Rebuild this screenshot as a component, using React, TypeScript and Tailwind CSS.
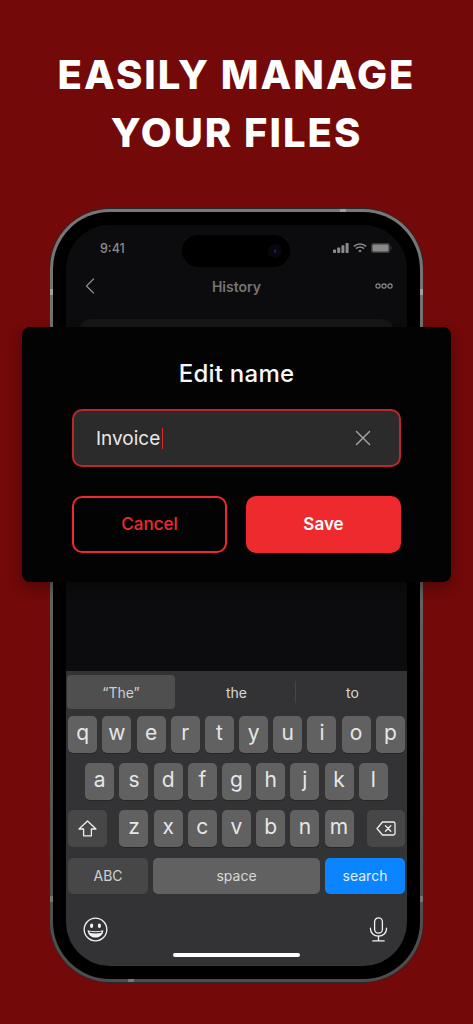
import React from 'react';
import { X } from 'lucide-react';

const font = { fontFamily: 'Inter, "Noto Sans", sans-serif' };

function Key({ label }: { label: string }) {
  return (
    <div className="flex h-[36.5px] w-[29px] items-center justify-center rounded-[5px] bg-[#616161] pb-[3px] text-[21px] leading-none text-[#e6e6e6] shadow-[0_1px_0_#262626]">
      {label}
    </div>
  );
}

function Signal() {
  return (
    <svg width="16" height="10" viewBox="0 0 16 10" fill="#8a8a8a">
      <rect x="0" y="6.5" width="3" height="3.5" rx="0.7" />
      <rect x="4.2" y="4.5" width="3" height="5.5" rx="0.7" />
      <rect x="8.4" y="2.3" width="3" height="7.7" rx="0.7" />
      <rect x="12.6" y="0" width="3" height="10" rx="0.7" />
    </svg>
  );
}

function Wifi() {
  return (
    <svg width="14" height="10" viewBox="0 0 14 10" fill="none" stroke="#8a8a8a" strokeWidth="1.6">
      <path d="M0.8 3.4C4.4 0.2 9.6 0.2 13.2 3.4" />
      <path d="M3 5.7C5.4 3.7 8.6 3.7 11 5.7" />
      <path d="M7 9.6L5.1 7.7C6.2 6.9 7.8 6.9 8.9 7.7Z" fill="#8a8a8a" stroke="none" />
    </svg>
  );
}

function Battery() {
  return (
    <svg width="21" height="10" viewBox="0 0 21 10">
      <rect x="0" y="0" width="19" height="10" rx="2.6" fill="#3a3a3a" />
      <rect x="1.5" y="1.5" width="16" height="7" rx="1.4" fill="#8a8a8a" />
      <rect x="19.6" y="3.4" width="1.2" height="3.2" rx="0.6" fill="#3a3a3a" />
    </svg>
  );
}

function Shift() {
  return (
    <svg width="19" height="17" viewBox="0 0 19 17" fill="none" stroke="#eeeeee" strokeWidth="1.3" strokeLinejoin="round">
      <path d="M9.5 1L1 9H5.6V15.8H13.4V9H18Z" />
    </svg>
  );
}

function Backspace() {
  return (
    <svg width="20" height="15" viewBox="0 0 20 15" fill="none" stroke="#eeeeee" strokeWidth="1.3" strokeLinecap="round" strokeLinejoin="round">
      <path d="M6.5 1H17.3C18.2 1 19 1.8 19 2.7V12.3C19 13.2 18.2 14 17.3 14H6.5L1 7.5Z" />
      <path d="M9.5 4.8L14.8 10.2M14.8 4.8L9.5 10.2" />
    </svg>
  );
}

function Emoji() {
  return (
    <svg width="25" height="25" viewBox="0 0 25 25" fill="none">
      <circle cx="12.5" cy="12.5" r="11.3" stroke="#f2f2f2" strokeWidth="1.3" />
      <ellipse cx="8.6" cy="8.8" rx="1.6" ry="2.2" fill="#f2f2f2" />
      <ellipse cx="16.4" cy="8.8" rx="1.6" ry="2.2" fill="#f2f2f2" />
      <path d="M4.6 13.2C9.5 14.6 15.5 14.6 20.4 13.2C20 18 16.6 20.6 12.5 20.6C8.4 20.6 5 18 4.6 13.2Z" fill="#f2f2f2" />
      <path d="M6.6 15.2C10.4 16.1 14.6 16.1 18.4 15.2" stroke="#333335" strokeWidth="1.2" />
    </svg>
  );
}

function Mic() {
  return (
    <svg width="19" height="25" viewBox="0 0 19 25" fill="none" stroke="#f2f2f2" strokeWidth="1.3" strokeLinecap="round">
      <rect x="5.6" y="0.8" width="7.8" height="15.4" rx="3.9" />
      <path d="M1.4 11.2C1.4 16 4.8 19.2 9.5 19.2C14.2 19.2 17.6 16 17.6 11.2" />
      <path d="M9.5 19.2V23.6M3.8 23.9H15.2" />
    </svg>
  );
}

function Keyboard() {
  return (
    <div className="mt-auto flex h-[295px] flex-col bg-[#333335] text-[#e6e6e6]">
      <div className="mt-[4px] flex h-[34px] items-center text-[14px] text-[#d8d8d8]">
        <div className="ml-[1px] flex h-full w-[108px] items-center justify-center rounded-[4px] bg-[#4f4f4f] text-[#cfcfcf]">“The”</div>
        <div className="flex h-full w-[120px] items-center justify-center pl-[3px]">the</div>
        <div className="h-[22px] w-px bg-[#454547]" />
        <div className="flex h-full flex-1 items-center justify-center pl-[2px]">to</div>
      </div>
      <div className="mt-[7px] flex justify-center gap-[5.2px]">
        {'qwertyuiop'.split('').map(k => <Key key={k} label={k} />)}
      </div>
      <div className="mt-[10.5px] flex justify-center gap-[5.2px]">
        {'asdfghjkl'.split('').map(k => <Key key={k} label={k} />)}
      </div>
      <div className="mt-[10.5px] flex items-center justify-between px-[2px]">
        <div className="flex h-[36.5px] w-[38.5px] items-center justify-center rounded-[5px] bg-[#474747]">
          <Shift />
        </div>
        <div className="flex gap-[5.2px]">
          {'zxcvbnm'.split('').map(k => <Key key={k} label={k} />)}
        </div>
        <div className="flex h-[36.5px] w-[38.5px] items-center justify-center rounded-[5px] bg-[#474747]">
          <Backspace />
        </div>
      </div>
      <div className="mt-[11px] flex h-[36.5px] gap-[5px] px-[2px] text-[14px]">
        <div className="flex w-[80px] items-center justify-center rounded-[5px] bg-[#474747] text-[#d0d0d0]">ABC</div>
        <div className="flex flex-1 items-center justify-center rounded-[5px] bg-[#616161] text-[#d8d8d8]">space</div>
        <div className="flex w-[80px] items-center justify-center rounded-[5px] bg-[#0a84ff] text-[#e4effa]">search</div>
      </div>
      <div className="mt-[22.5px] flex items-center justify-between pl-[17px] pr-[19px]">
        <Emoji />
        <Mic />
      </div>
      <div className="mt-[11px] flex justify-center">
        <div className="h-[4px] w-[127px] rounded-full bg-white" />
      </div>
    </div>
  );
}

function Phone() {
  return (
    <div className="relative mx-auto mt-[47px] h-[773px] w-[373px] rounded-[60px] bg-gradient-to-b from-[#787878] to-[#4c4c4c] p-[3px] shadow-[0_0_0_1px_#2a2a2a]">
      {/* antenna bands on the frame */}
      <div className="absolute left-[290px] top-0 h-[3px] w-[6px] bg-[#a0a0a0]" />
      <div className="absolute left-[78px] bottom-0 h-[3px] w-[6px] bg-[#777777]" />
      <div className="absolute left-0 top-[80px] h-[6px] w-[3px] bg-[#a0a0a0]" />
      <div className="absolute right-0 top-[80px] h-[6px] w-[3px] bg-[#a0a0a0]" />
      <div className="absolute left-0 bottom-[80px] h-[6px] w-[3px] bg-[#777777]" />
      <div className="absolute right-0 bottom-[80px] h-[6px] w-[3px] bg-[#777777]" />
      <div className="h-full rounded-[57px] bg-black p-[13px]">
        <div className="flex h-full flex-col overflow-hidden rounded-[44px] bg-[#0c0c0e]">
          <div className="relative flex h-[47px] shrink-0 items-center justify-between pl-[34px] pr-[15px] text-[12.5px] font-medium text-[#8a8a8a]">
            <span className="mt-[2px]">9:41</span>
            <div className="absolute left-[116px] top-[10px] flex h-[32px] w-[108px] items-center justify-end rounded-[16px] bg-black pr-[8px]">
              <div className="flex h-[14px] w-[14px] items-center justify-center rounded-full bg-[#07070d]">
                <div className="h-[4px] w-[2px] rounded-full bg-[#1f1f5c]" />
              </div>
            </div>
            <div className="mt-[-2px] flex items-center gap-[4px]">
              <Signal />
              <Wifi />
              <Battery />
            </div>
          </div>
          <div className="relative flex h-[28px] shrink-0 items-center justify-center">
            <svg className="absolute left-[19px] top-[6px]" width="10" height="16" viewBox="0 0 10 16" fill="none" stroke="#8a8a8a" strokeWidth="1.3" strokeLinecap="round" strokeLinejoin="round">
              <path d="M8.5 1L1.5 8L8.5 15" />
            </svg>
            <span className="text-[14px] font-semibold text-[#757575]">History</span>
            <svg className="absolute right-[14px] top-[11px]" width="18" height="6" viewBox="0 0 18 6" fill="none" stroke="#8a8a8a" strokeWidth="1.2">
              <circle cx="3" cy="3" r="2.1" />
              <circle cx="9" cy="3" r="2.1" />
              <circle cx="15" cy="3" r="2.1" />
            </svg>
          </div>
          <div className="mx-[14px] mt-[19px] h-[80px] rounded-[10px] bg-[#161618]" />
          <Keyboard />
        </div>
      </div>
    </div>
  );
}

function EditDialog() {
  return (
    <div className="absolute left-[22px] top-[327px] flex h-[255px] w-[429px] flex-col items-center rounded-[8px] bg-[#030303] px-[50px] pt-[30px] shadow-[0_6px_14px_rgba(0,0,0,0.3)]">
      <div className="text-[24px] font-medium leading-[34px] tracking-[0.01em] text-[#f8f8f8]">Edit name</div>
      <div className="mt-[18px] flex h-[58px] w-full items-center rounded-[10px] border-[2px] border-[#bd272b] bg-[#2b2b2b] pl-[22px] pr-[23px]">
        <span className="mt-[2px] text-[19px] text-[#e8e8e8]">Invoice</span>
        <span className="ml-[2px] h-[21px] w-[1px] bg-[#e0272c]" />
        <X className="ml-auto h-[26px] w-[26px] text-[#a3a3a3]" strokeWidth={1.3} />
      </div>
      <div className="mt-[29px] grid w-full grid-cols-2 gap-[19px]">
        <div className="flex h-[57px] items-center justify-center rounded-[10px] border-[2px] border-[#ee2a2e] text-[17px] font-medium text-[#ee2a2e]">
          Cancel
        </div>
        <div className="flex h-[57px] items-center justify-center rounded-[10px] bg-[#ee2a2e] text-[17px] font-semibold text-white">
          Save
        </div>
      </div>
    </div>
  );
}

export default function App() {
  return (
    <div className="relative h-[1024px] w-[473px] overflow-hidden bg-[#730909]" style={font}>
      <h1 className="pt-[46px] text-center text-[40px] font-extrabold leading-[58px] tracking-[0.05em] text-white">
        EASILY MANAGE
        <br />
        YOUR FILES
      </h1>
      <Phone />
      <EditDialog />
    </div>
  );
}
